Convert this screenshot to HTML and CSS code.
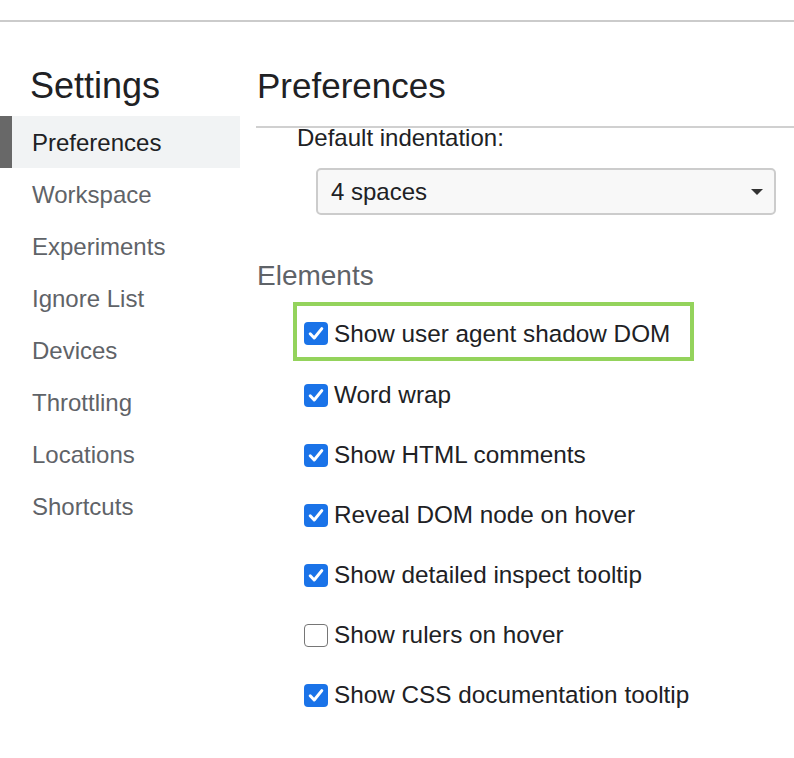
FILE: index.html
```html
<!DOCTYPE html>
<html>
<head>
<meta charset="utf-8">
<link rel="stylesheet" href="styles.css">
</head>
<body>
<div class="topbar"></div>
<div class="layout">
  <nav class="sidebar">
    <div class="title">Settings</div>
    <div class="nav-item selected">Preferences</div>
    <div class="nav-item">Workspace</div>
    <div class="nav-item">Experiments</div>
    <div class="nav-item">Ignore List</div>
    <div class="nav-item">Devices</div>
    <div class="nav-item">Throttling</div>
    <div class="nav-item">Locations</div>
    <div class="nav-item">Shortcuts</div>
  </nav>
  <main class="content">
    <div class="heading">Preferences</div>
    <div class="field-label">Default indentation:</div>
    <div class="select">
      <span>4 spaces</span>
      <span class="arrow"></span>
    </div>
    <div class="section-title">Elements</div>
    <div class="rows">
      <div class="row highlighted"><span class="cb checked"><svg viewBox="0 0 24 23" width="24" height="23"><path d="M6.2 11.8 L10.2 16 L17.8 6.6" fill="none" stroke="#fff" stroke-width="3" stroke-linecap="round" stroke-linejoin="round"/></svg></span><span class="lbl">Show user agent shadow DOM</span></div>
      <div class="row"><span class="cb checked"><svg viewBox="0 0 24 23" width="24" height="23"><path d="M6.2 11.8 L10.2 16 L17.8 6.6" fill="none" stroke="#fff" stroke-width="3" stroke-linecap="round" stroke-linejoin="round"/></svg></span><span class="lbl">Word wrap</span></div>
      <div class="row"><span class="cb checked"><svg viewBox="0 0 24 23" width="24" height="23"><path d="M6.2 11.8 L10.2 16 L17.8 6.6" fill="none" stroke="#fff" stroke-width="3" stroke-linecap="round" stroke-linejoin="round"/></svg></span><span class="lbl">Show HTML comments</span></div>
      <div class="row"><span class="cb checked"><svg viewBox="0 0 24 23" width="24" height="23"><path d="M6.2 11.8 L10.2 16 L17.8 6.6" fill="none" stroke="#fff" stroke-width="3" stroke-linecap="round" stroke-linejoin="round"/></svg></span><span class="lbl">Reveal DOM node on hover</span></div>
      <div class="row"><span class="cb checked"><svg viewBox="0 0 24 23" width="24" height="23"><path d="M6.2 11.8 L10.2 16 L17.8 6.6" fill="none" stroke="#fff" stroke-width="3" stroke-linecap="round" stroke-linejoin="round"/></svg></span><span class="lbl">Show detailed inspect tooltip</span></div>
      <div class="row"><span class="cb"></span><span class="lbl">Show rulers on hover</span></div>
      <div class="row"><span class="cb checked"><svg viewBox="0 0 24 23" width="24" height="23"><path d="M6.2 11.8 L10.2 16 L17.8 6.6" fill="none" stroke="#fff" stroke-width="3" stroke-linecap="round" stroke-linejoin="round"/></svg></span><span class="lbl">Show CSS documentation tooltip</span></div>
    </div>
  </main>
</div>
</body>
</html>
```

FILE: styles.css
```css
html, body {
  margin: 0;
  padding: 0;
  background: #ffffff;
}
body {
  font-family: "Liberation Sans", Arial, sans-serif;
  color: #202124;
  width: 794px;
  height: 758px;
  overflow: hidden;
}
.topbar {
  height: 20px;
  border-bottom: 2px solid #cbcbcb;
}
.layout {
  display: flex;
}
.sidebar {
  width: 240px;
  flex: none;
}
.title {
  font-size: 36px;
  line-height: 40px;
  padding: 44px 0 0 30px;
  margin-bottom: 10px;
  color: #202124;
}
.nav-item {
  height: 52px;
  line-height: 54px;
  font-size: 24px;
  padding-left: 32px;
  color: #5f6368;
}
.nav-item.selected {
  background: #f1f3f4;
  border-left: 12px solid #686868;
  padding-left: 20px;
  color: #202124;
}
.content {
  flex: 1;
  margin-left: 16px;
}
.heading {
  font-size: 35px;
  line-height: 40px;
  padding: 44px 0 20px 1px;
  border-bottom: 2px solid #d0d0d0;
  color: #202124;
}
.field-label {
  font-size: 24px;
  line-height: 20px;
  padding-left: 41px;
  color: #202124;
}
.select {
  margin: 20px 18px 0 60px;
  height: 47px;
  box-sizing: border-box;
  border: 2px solid #cccccc;
  border-radius: 5px;
  background: #f8f8f8;
  display: flex;
  align-items: center;
  justify-content: space-between;
  padding: 1px 11px 0 13px;
  font-size: 24px;
  color: #202124;
}
.arrow {
  width: 0;
  height: 0;
  border-left: 6px solid transparent;
  border-right: 6px solid transparent;
  border-top: 6px solid #333333;
}
.section-title {
  margin-top: 45px;
  font-size: 28px;
  line-height: 32px;
  padding-left: 1px;
  color: #5f6368;
}
.rows {
  margin-top: 10px;
  padding-left: 37px;
}
.row {
  display: flex;
  align-items: center;
  height: 60px;
  box-sizing: border-box;
  padding-left: 11px;
  font-size: 24.3px;
  color: #202124;
}
.row.highlighted {
  width: fit-content;
  height: 59px;
  border: 4px solid #94d35c;
  padding: 4px 20px 0 7px;
  margin-bottom: 4px;
}
.cb {
  width: 24px;
  height: 23px;
  box-sizing: border-box;
  border: 1.5px solid #767676;
  border-radius: 4px;
  background: #ffffff;
  display: flex;
  flex: none;
}
.cb.checked {
  border: none;
  background: #1a73e8;
}
.lbl {
  margin-left: 6px;
  white-space: nowrap;
}
```
